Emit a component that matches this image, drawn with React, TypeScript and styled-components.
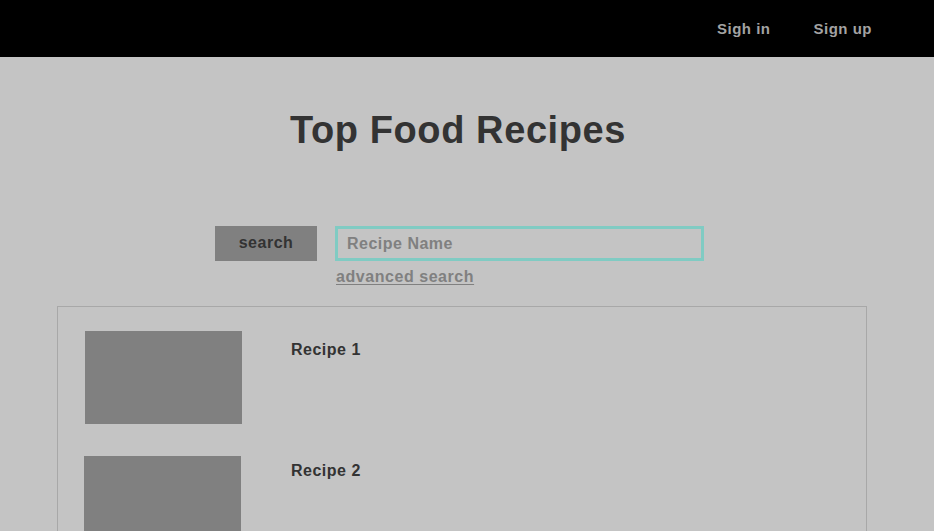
import React from "react";
import styled, { createGlobalStyle } from "styled-components";

const GlobalStyle = createGlobalStyle`
  html, body {
    margin: 0;
    padding: 0;
    overflow: hidden;
    background: #c4c4c4;
  }
  body {
    font-family: "Liberation Sans", Arial, sans-serif;
  }
`;

const Page = styled.div`
  min-height: 531px;
  background: #c4c4c4;
`;

const Header = styled.header`
  height: 57px;
  background: #000;
  display: flex;
  align-items: center;
  justify-content: flex-end;
  padding-right: 62px;
  gap: 43px;
`;

const NavLink = styled.a`
  color: #a3a3a3;
  font-size: 15px;
  font-weight: bold;
  letter-spacing: 0.5px;
  text-decoration: none;
  cursor: pointer;
`;

const Main = styled.main`
  width: 919px;
  display: flex;
  flex-direction: column;
  align-items: center;
`;

const Title = styled.h1`
  margin: 51px 3px 0 0;
  font-size: 38px;
  line-height: 44px;
  letter-spacing: 0.6px;
  font-weight: bold;
  color: #333;
`;

const SearchArea = styled.div`
  margin-top: 74px;
  display: flex;
  align-items: flex-start;
  gap: 18px;
`;

const SearchButton = styled.button`
  width: 102px;
  height: 35px;
  border: none;
  background: #808080;
  color: #333;
  font-family: "Liberation Sans", Arial, sans-serif;
  font-size: 16px;
  font-weight: bold;
  letter-spacing: 0.5px;
  padding: 0 0 2px;
  cursor: pointer;
`;

const InputColumn = styled.div`
  display: flex;
  flex-direction: column;
  align-items: flex-start;
  gap: 7px;
`;

const SearchInput = styled.input`
  box-sizing: border-box;
  width: 369px;
  height: 35px;
  border: 3px solid #80cbc3;
  background: #c4c4c4;
  padding: 0 9px;
  font-family: "Liberation Sans", Arial, sans-serif;
  font-size: 16px;
  font-weight: bold;
  letter-spacing: 0.5px;
  color: #333;
  outline: none;
  &::placeholder {
    color: #808080;
  }
`;

const AdvancedLink = styled.a`
  margin-left: 1px;
  color: #808080;
  font-size: 16px;
  font-weight: bold;
  letter-spacing: 0.55px;
  text-decoration: underline;
  text-underline-offset: 2px;
  cursor: pointer;
`;

const Card = styled.section`
  align-self: flex-start;
  box-sizing: border-box;
  margin: 20px 0 0 57px;
  width: 810px;
  border: 1px solid #a8a8a8;
  padding: 24px 0 40px 27px;
  display: flex;
  flex-direction: column;
  gap: 32px;
`;

const Row = styled.div<{ $shift: number }>`
  display: flex;
  align-items: flex-start;
  margin-left: ${(p) => p.$shift}px;
`;

const Thumb = styled.div`
  width: 157px;
  height: 93px;
  background: #808080;
  flex-shrink: 0;
`;

const RecipeName = styled.div<{ $top: number; $left: number }>`
  margin: ${(p) => p.$top}px 0 0 ${(p) => p.$left}px;
  font-size: 16px;
  font-weight: bold;
  letter-spacing: 0.5px;
  color: #333;
`;

const recipes = [
  { name: "Recipe 1", shift: 0, top: 10, left: 49 },
  { name: "Recipe 2", shift: -1, top: 6, left: 50 },
];

export default function App() {
  return (
    <Page>
      <GlobalStyle />
      <Header>
        <NavLink>Sigh in</NavLink>
        <NavLink>Sign up</NavLink>
      </Header>
      <Main>
        <Title>Top Food Recipes</Title>
        <SearchArea>
          <SearchButton>search</SearchButton>
          <InputColumn>
            <SearchInput placeholder="Recipe Name" />
            <AdvancedLink>advanced search</AdvancedLink>
          </InputColumn>
        </SearchArea>
        <Card>
          {recipes.map((r) => (
            <Row key={r.name} $shift={r.shift}>
              <Thumb />
              <RecipeName $top={r.top} $left={r.left}>
                {r.name}
              </RecipeName>
            </Row>
          ))}
        </Card>
      </Main>
    </Page>
  );
}
